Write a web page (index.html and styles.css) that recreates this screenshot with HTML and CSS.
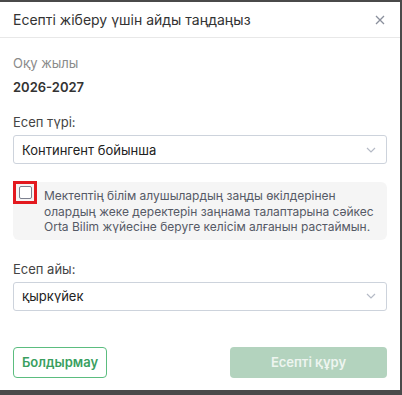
FILE: index.html
```html
<!DOCTYPE html>
<html lang="kk">
<head>
<meta charset="utf-8">
<link rel="stylesheet" href="styles.css">
</head>
<body>
<div class="modal">
  <div class="modal-header">
    <span class="modal-title">Есепті жіберу үшін айды таңдаңыз</span>
    <span class="close">
      <svg width="10" height="10" viewBox="0 0 10 10"><path d="M1 1L9 9M9 1L1 9" stroke="#8a8f9c" stroke-width="1.3" fill="none"/></svg>
    </span>
  </div>
  <div class="modal-body">
    <div class="field-label muted">Оқу жылы</div>
    <div class="year">2026-2027</div>
    <div class="field-label type-label">Есеп түрі:</div>
    <div class="select">
      <span>Контингент бойынша</span>
      <svg class="chev" width="10" height="6" viewBox="0 0 10 6"><path d="M1 1L5 5L9 1" stroke="#b5bac6" stroke-width="1.2" fill="none"/></svg>
    </div>
    <div class="consent">
      <div class="check-wrap"><span class="check"></span></div>
      <div class="consent-text">Мектептің білім алушылардың заңды өкілдерінен олардың жеке деректерін заңнама талаптарына сәйкес Orta Bilim жүйесіне беруге келісім алғанын растаймын.</div>
    </div>
    <div class="field-label month-label">Есеп айы:</div>
    <div class="select">
      <span>қыркүйек</span>
      <svg class="chev" width="10" height="6" viewBox="0 0 10 6"><path d="M1 1L5 5L9 1" stroke="#b5bac6" stroke-width="1.2" fill="none"/></svg>
    </div>
    <div class="actions">
      <button class="btn btn-outline">Болдырмау</button>
      <button class="btn btn-primary">Есепті құру</button>
    </div>
  </div>
</div>
</body>
</html>
```
FILE: styles.css
```css
html, body {
  margin: 0;
  padding: 0;
  background: #4a4a4a;
  height: 395px;
  overflow: hidden;
}
body {
  font-family: Inter, "Noto Sans", sans-serif;
  padding-top: 2px;
}
.modal {
  width: 400px;
  height: 388px;
  background: #fff;
  box-sizing: border-box;
}
.modal-header {
  height: 35px;
  border-bottom: 1px solid #e8e8e8;
  display: flex;
  align-items: center;
  justify-content: space-between;
  padding: 0 12px 0 13px;
}
.modal-title {
  font-size: 14px;
  color: #333;
}
.close {
  display: flex;
  width: 16px;
  justify-content: center;
}
.modal-body {
  padding: 17px 13px 0 13px;
}
.field-label {
  font-size: 13px;
  color: #444;
  line-height: 16px;
}
.muted {
  color: #8a8a8a;
}
.year {
  font-size: 13px;
  font-weight: 600;
  color: #333;
  line-height: 16px;
  margin-top: 8px;
}
.type-label {
  margin-top: 19px;
}
.select {
  margin-top: 5px;
  height: 29px;
  box-sizing: border-box;
  border: 1px solid #cdd3dc;
  border-radius: 3px;
  display: flex;
  align-items: center;
  justify-content: space-between;
  padding: 0 10px 0 8px;
  font-size: 13px;
  color: #222;
}
.consent {
  margin-top: 18px;
  background: #f5f5f5;
  border-radius: 6px;
  display: flex;
  gap: 7px;
  padding: 6px 8px 5px 0;
}
.check-wrap {
  width: 18px;
  height: 17px;
  border: 3px solid #e3191f;
  display: flex;
  align-items: center;
  justify-content: center;
  margin-top: -7px;
  flex-shrink: 0;
}
.check {
  width: 11px;
  height: 11px;
  border: 1.5px solid #7d8190;
  border-radius: 2px;
  background: #fff;
}
.consent-text {
  font-size: 12px;
  line-height: 15.5px;
  color: #555a66;
}
.month-label {
  margin-top: 21px;
}
.actions {
  margin-top: 36px;
  display: flex;
  justify-content: space-between;
}
.btn {
  height: 31px;
  font-family: Inter, "Noto Sans", sans-serif;
  font-size: 13px;
  font-weight: 600;
  border-radius: 4px;
  box-sizing: border-box;
}
.btn-outline {
  width: 94px;
  background: #fff;
  border: 1px solid #5bbd7f;
  color: #3a9f5f;
}
.btn-primary {
  width: 157px;
  background: #b3d3be;
  border: none;
  color: #eef5f0;
}
```
